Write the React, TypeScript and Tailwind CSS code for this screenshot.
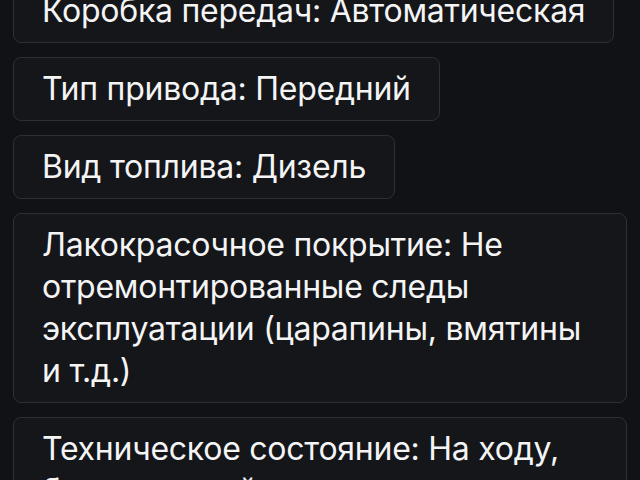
import React from "react";

const specs: string[] = [
  "Коробка передач: Автоматическая",
  "Тип привода: Передний",
  "Вид топлива: Дизель",
  "Лакокрасочное покрытие: Не отремонтированные следы эксплуатации (царапины, вмятины и т.д.)",
  "Техническое состояние: На ходу, без вложений",
];

const SpecCard: React.FC<{ text: string }> = ({ text }) => (
  <div className="w-fit max-w-full rounded-lg border border-[#2e2f33] bg-[#15161a] px-[28px] py-[10px] text-[32px] leading-[42px] tracking-[-0.25px] text-[#f4f4f5]">
    {text}
  </div>
);

export default function App() {
  return (
    <div
      className="h-[480px] overflow-hidden bg-[#111215] px-[13px]"
      style={{ fontFamily: "Inter, 'Noto Sans', sans-serif" }}
    >
      <div className="mt-[-21px] flex flex-col gap-[14px]">
        {specs.map((s) => (
          <SpecCard key={s} text={s} />
        ))}
      </div>
    </div>
  );
}
